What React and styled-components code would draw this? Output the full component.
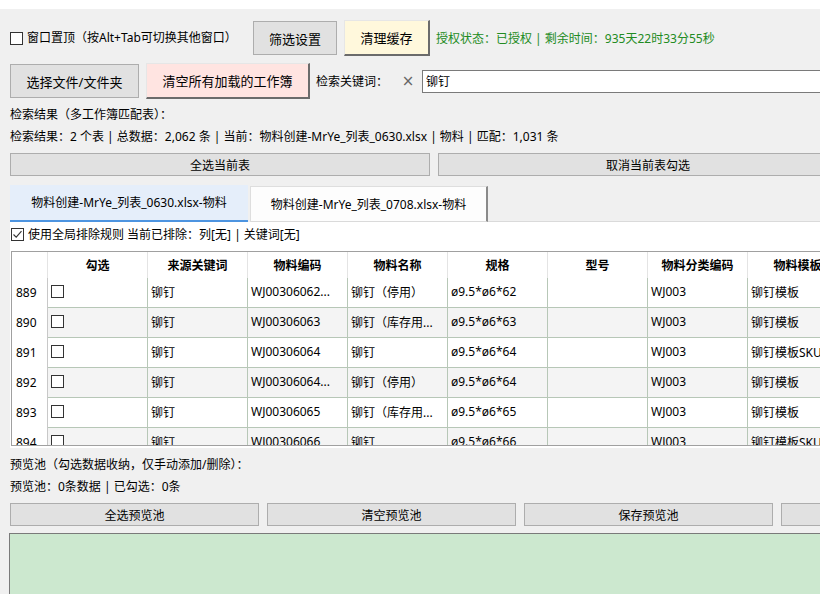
import React from 'react';
import styled, { createGlobalStyle } from 'styled-components';

const Global = createGlobalStyle`
  html, body { margin: 0; padding: 0; overflow: hidden; background: #f0f0f0; }
  body {
    font-family: "Noto Sans", "Noto Sans CJK SC", sans-serif;
    font-size: 12px;
    color: #000;
  }
  * { box-sizing: border-box; }
`;

const Window = styled.div`
  width: 1100px;
  height: 594px;
  display: flex;
  flex-direction: column;
  background: #f0f0f0;
  overflow: hidden;
`;

const TitleStrip = styled.div`
  flex: none;
  height: 9px;
  background: #ffffff;
`;

const Row = styled.div`
  flex: none;
  display: flex;
  align-items: center;
  height: ${(p) => p.$h}px;
  margin-top: ${(p) => p.$mt}px;
  padding-left: 10px;
`;

const CheckGroup = styled.label`
  flex: none;
  display: flex;
  align-items: center;
  gap: 4px;
  width: ${(p) => (p.$w ? `${p.$w}px` : 'auto')};
  font-size: 12px;
  line-height: 18px;
  white-space: nowrap;
`;

const Box = styled.span`
  flex: none;
  width: 13px;
  height: 13px;
  border: 1px solid #333;
  background: #fff;
  display: flex;
  align-items: center;
  justify-content: center;
`;

const Check = ({ checked }) => (
  <Box>
    {checked && (
      <svg width="11" height="11" viewBox="0 0 11 11">
        <path d="M1.5 5.5 L4.2 8.2 L9.5 2.2" fill="none" stroke="#333" strokeWidth="1.1" />
      </svg>
    )}
  </Box>
);

const FlatButton = styled.div`
  flex: none;
  display: flex;
  align-items: center;
  justify-content: center;
  width: ${(p) => p.$w}px;
  height: ${(p) => p.$h}px;
  background: #e1e1e1;
  border: 1px solid #adadad;
  font-size: ${(p) => p.$fs ?? 12}px;
  white-space: nowrap;
  color: #000;
`;

const RaisedButton = styled.div`
  flex: none;
  display: flex;
  align-items: center;
  justify-content: center;
  width: ${(p) => p.$w}px;
  height: ${(p) => p.$h}px;
  margin-left: 7px;
  background: ${(p) => p.$bg};
  border-style: solid;
  border-width: 1px 2px 2px 1px;
  border-color: #e6e6e6 #6b6b6b #6b6b6b #e6e6e6;
  font-size: 13px;
  white-space: nowrap;
  color: #000;
`;

const StatusText = styled.span`
  margin-left: 6px;
  color: #228b22;
  font-size: 12px;
  white-space: nowrap;
`;

const SearchLabel = styled.span`
  flex: none;
  width: 82px;
  margin-left: 6px;
  font-size: 12px;
  white-space: nowrap;
`;

const ClearX = styled.span`
  flex: none;
  width: 20px;
  text-align: center;
  color: #666;
  font-family: "DejaVu Sans", sans-serif;
  font-size: 15px;
  line-height: 18px;
`;

const SearchInput = styled.input`
  flex: none;
  margin-left: 4px;
  width: 500px;
  height: 23px;
  border: 1px solid #7a7a7a;
  background: #fff;
  padding: 0 3px;
  font-family: inherit;
  font-size: 12px;
  color: #000;
  outline: none;
`;

const Line = styled.div`
  flex: none;
  height: 18px;
  line-height: 18px;
  margin-top: ${(p) => p.$mt}px;
  padding-left: 10px;
  font-size: 12px;
  white-space: nowrap;
`;

const TabStrip = styled.div`
  flex: none;
  display: flex;
  align-items: flex-end;
  height: 37px;
  margin-top: 9px;
  padding-left: 10px;
`;

const Tab = styled.div`
  flex: none;
  width: 238px;
  height: ${(p) => (p.$active ? 37 : 36)}px;
  display: flex;
  align-items: center;
  justify-content: center;
  padding-bottom: 1px;
  font-size: 12px;
  white-space: nowrap;
  background: ${(p) => (p.$active ? '#e5eefa' : '#fdfdfd')};
  border-bottom: ${(p) => (p.$active ? '2px solid #4d94e0' : '1px solid #dadada')};
  border-top: ${(p) => (p.$active ? 'none' : '1px solid #dedede')};
  border-left: ${(p) => (p.$active ? 'none' : '1px solid #dedede')};
  border-right: ${(p) => (p.$active ? 'none' : '2px solid #8a8a8a')};
  margin-left: ${(p) => (p.$active ? 0 : 2)}px;
`;

const TabFiller = styled.div`
  flex: 1;
  height: 1px;
  background: #dadada;
`;

const Panel = styled.div`
  flex: none;
  margin-left: 10px;
  height: 226px;
  background: #fff;
  padding-left: 1px;
  display: flex;
  flex-direction: column;
`;

const OptionRow = styled.div`
  flex: none;
  height: 29px;
  display: flex;
  align-items: center;
  padding-bottom: 4px;
`;

const Grid = styled.div`
  flex: none;
  height: 195px;
  border-top: 1px solid #a0a0a0;
  border-left: 1px solid #a0a0a0;
  border-bottom: 1px solid #a0a0a0;
  overflow: hidden;
  background: #fff;
`;

const GridRow = styled.div`
  display: flex;
  height: ${(p) => p.$h}px;
`;

const HeadCell = styled.div`
  flex: none;
  width: ${(p) => p.$w}px;
  height: 100%;
  border-right: 1px solid #e4e4e4;
  display: flex;
  align-items: center;
  justify-content: center;
  font-weight: bold;
  font-size: 12px;
  white-space: nowrap;
  overflow: hidden;
`;

const RowNum = styled.div`
  flex: none;
  width: 36px;
  height: 100%;
  border-right: 1px solid #c8c8c8;
  display: flex;
  align-items: center;
  padding-left: 4px;
  padding-bottom: 2px;
  font-size: 12px;
  background: #fff;
`;

const Cell = styled.div`
  flex: none;
  width: 100px;
  height: 100%;
  border-right: 1px solid #b7c7b7;
  border-bottom: 1px solid #b7c7b7;
  background: ${(p) => (p.$alt ? '#f4f4f4' : '#fff')};
  display: flex;
  align-items: center;
  padding-left: 3px;
  padding-bottom: 2px;
  font-size: 12px;
  white-space: nowrap;
  overflow: hidden;
`;

const ButtonRow = styled.div`
  flex: none;
  display: flex;
  gap: 8px;
  height: 23px;
  margin-top: 7px;
  padding-left: 10px;
`;

const PoolArea = styled.div`
  flex: 1;
  margin-top: 7px;
  margin-left: 9px;
  background: #cce8cf;
  border-top: 1px solid #7a7a7a;
  border-left: 1px solid #7a7a7a;
`;

const columns = ['勾选', '来源关键词', '物料编码', '物料名称', '规格', '型号', '物料分类编码', '物料模板'];

const rows = [
  ['889', '铆钉', 'WJ00306062...', '铆钉（停用）', 'ø9.5*ø6*62', '', 'WJ003', '铆钉模板'],
  ['890', '铆钉', 'WJ00306063', '铆钉（库存用...', 'ø9.5*ø6*63', '', 'WJ003', '铆钉模板'],
  ['891', '铆钉', 'WJ00306064', '铆钉', 'ø9.5*ø6*64', '', 'WJ003', '铆钉模板SKU'],
  ['892', '铆钉', 'WJ00306064...', '铆钉（停用）', 'ø9.5*ø6*64', '', 'WJ003', '铆钉模板'],
  ['893', '铆钉', 'WJ00306065', '铆钉（库存用...', 'ø9.5*ø6*65', '', 'WJ003', '铆钉模板'],
  ['894', '铆钉', 'WJ00306066', '铆钉', 'ø9.5*ø6*66', '', 'WJ003', '铆钉模板SKU'],
];

export default function App() {
  return (
    <>
      <Global />
      <Window>
        <TitleStrip />
        <Row $h={36} $mt={11}>
          <CheckGroup $w={243}>
            <Check />
            <span>窗口置顶（按Alt+Tab可切换其他窗口）</span>
          </CheckGroup>
          <FlatButton $w={84} $h={34} $fs={13}>筛选设置</FlatButton>
          <RaisedButton $w={86} $h={36} $bg="#fff8dc">清理缓存</RaisedButton>
          <StatusText>授权状态：已授权 | 剩余时间：935天22时33分55秒</StatusText>
        </Row>
        <Row $h={36} $mt={7}>
          <FlatButton $w={129} $h={34} $fs={13}>选择文件/文件夹</FlatButton>
          <RaisedButton $w={164} $h={36} $bg="#ffe4e1">清空所有加载的工作簿</RaisedButton>
          <SearchLabel>检索关键词：</SearchLabel>
          <ClearX>×</ClearX>
          <SearchInput defaultValue="铆钉" />
        </Row>
        <Line $mt={7}>检索结果（多工作簿匹配表）：</Line>
        <Line $mt={4}>
          检索结果：2 个表 | 总数据：2,062 条 | 当前：物料创建-MrYe_列表_0630.xlsx | 物料 | 匹配：1,031 条
        </Line>
        <ButtonRow>
          <FlatButton $w={420} $h={23}>全选当前表</FlatButton>
          <FlatButton $w={420} $h={23}>取消当前表勾选</FlatButton>
        </ButtonRow>
        <TabStrip>
          <Tab $active>物料创建-MrYe_列表_0630.xlsx-物料</Tab>
          <Tab>物料创建-MrYe_列表_0708.xlsx-物料</Tab>
          <TabFiller />
        </TabStrip>
        <Panel>
          <OptionRow>
            <CheckGroup>
              <Check checked />
              <span>使用全局排除规则 当前已排除：列[无] | 关键词[无]</span>
            </CheckGroup>
          </OptionRow>
          <Grid>
            <GridRow $h={26}>
              <HeadCell $w={36} />
              {columns.map((c) => (
                <HeadCell key={c} $w={100}>{c}</HeadCell>
              ))}
            </GridRow>
            {rows.map((r, i) => (
              <GridRow key={r[0]} $h={30}>
                <RowNum>{r[0]}</RowNum>
                <Cell $alt={i % 2 === 1}>
                  <Check />
                </Cell>
                {r.slice(1).map((v, j) => (
                  <Cell key={j} $alt={i % 2 === 1}>{v}</Cell>
                ))}
              </GridRow>
            ))}
          </Grid>
        </Panel>
        <Line $mt={8}>预览池（勾选数据收纳，仅手动添加/删除）：</Line>
        <Line $mt={4}>预览池：0条数据 | 已勾选：0条</Line>
        <ButtonRow>
          <FlatButton $w={249} $h={23}>全选预览池</FlatButton>
          <FlatButton $w={249} $h={23}>清空预览池</FlatButton>
          <FlatButton $w={249} $h={23}>保存预览池</FlatButton>
          <FlatButton $w={249} $h={23} />
        </ButtonRow>
        <PoolArea />
      </Window>
    </>
  );
}
